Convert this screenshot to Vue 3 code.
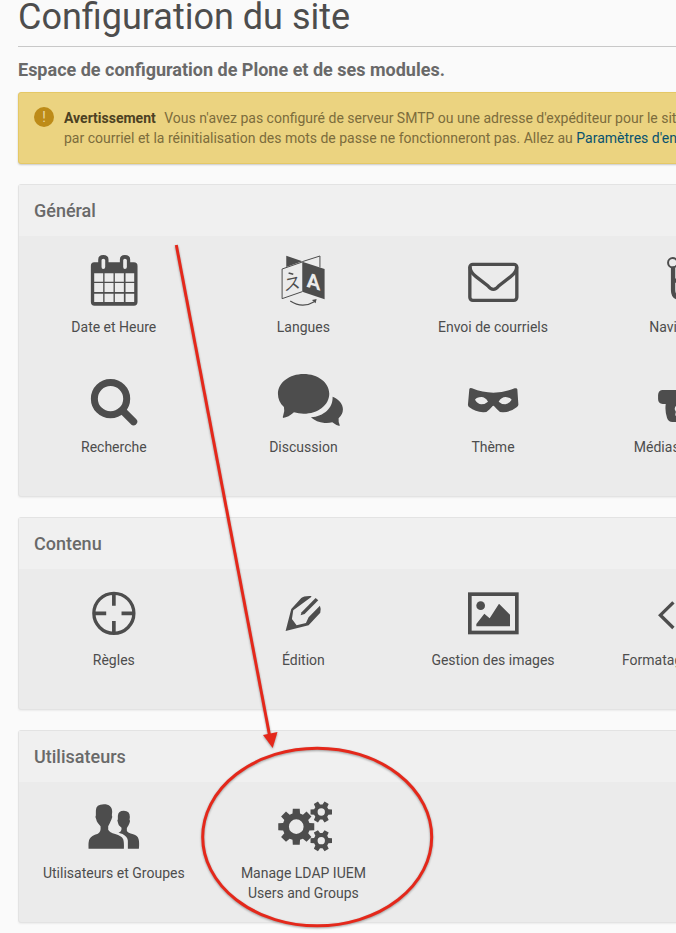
<script setup>
const gear = (cx, cy, teeth, outer, body, hole, wide, narrow, start = 0) => {
  const step = (Math.PI * 2) / teeth
  const points = []
  for (let i = 0; i < teeth; i++) {
    const a = start + i * step
    for (const [offset, r] of [[-wide, body], [-narrow, outer], [narrow, outer], [wide, body]]) {
      points.push(`${(cx + Math.cos(a + offset) * r).toFixed(1)} ${(cy + Math.sin(a + offset) * r).toFixed(1)}`)
    }
  }
  return `M${points.join('L')}Z M${cx - hole} ${cy}a${hole} ${hole} 0 1 0 ${hole * 2} 0a${hole} ${hole} 0 1 0 ${-hole * 2} 0Z`
}
const gears = [
  gear(320, 320, 8, 55, 41, 22, 0.28, 0.19),
  gear(395, 276, 6, 33, 23, 11, 0.36, 0.22),
  gear(395, 362, 6, 33, 23, 11, 0.36, 0.22)
].join(' ')

const panels = [
  {
    title: 'Général',
    items: [
      { label: 'Date et Heure', icon: 'calendar', box: '-3.6 -9 270 240' },
      { label: 'Langues', icon: 'language', box: '565.2 -9 270 240' },
      { label: 'Envoi de courriels', icon: 'mail', box: '54 -9 270 240' },
      { label: 'Navigation', icon: 'navigation', box: '622.8 -9 270 240' },
      { label: 'Recherche', icon: 'search', box: '-3.6 -9 270 240' },
      { label: 'Discussion', icon: 'discussion', box: '565.2 -9 270 240' },
      { label: 'Thème', icon: 'theme', box: '54 -9 270 240' },
      { label: 'Médias sociaux', icon: 'social', box: '622.8 -9 270 240' }
    ]
  },
  {
    title: 'Contenu',
    items: [
      { label: 'Règles', icon: 'rules', box: '-3.6 -30 270 240' },
      { label: 'Édition', icon: 'editing', box: '565.2 -30 270 240' },
      { label: 'Gestion des images', icon: 'image', box: '54 -30 270 240' },
      { label: 'Formatage du texte', icon: 'code', box: '622.8 -30 270 240' }
    ]
  },
  {
    title: 'Utilisateurs',
    items: [
      { label: 'Utilisateurs et Groupes', icon: 'users', box: '176.4 189 270 240' },
      { label: 'Manage LDAP IUEM Users and Groups', icon: 'gears', box: '205.2 189 270 240' }
    ]
  }
]
</script>

<template>
  <main class="page">
    <div class="content">
      <h1>Configuration du site</h1>
      <p class="lead">Espace de configuration de Plone et de ses modules.</p>
      <div class="warning">
        <span class="badge">!</span>
        <div class="message">
          <div><strong>Avertissement</strong>Vous n'avez pas configuré de serveur SMTP ou une adresse d'expéditeur pour le site. L'envoi</div>
          <div>par courriel et la réinitialisation des mots de passe ne fonctionneront pas. Allez au <a>Paramètres d'envoi</a></div>
        </div>
      </div>
      <section v-for="panel in panels" :key="panel.title" class="panel">
        <h2>{{ panel.title }}</h2>
        <div class="grid">
          <div v-for="item in panel.items" :key="item.label" class="item">
            <svg class="icon" :viewBox="item.box">
              <template v-if="item.icon === 'calendar'">
                <path fill-rule="evenodd" d="M72 67H84V59Q84 45 99 45Q115 45 115 59V67H149V59Q149 45 164 45Q180 45 180 59V67H191Q202 67 202 78V186Q202 197 191 197H73Q62 197 62 186V78Q62 67 72 67ZM94 61V81Q94 87 99 87Q105 87 105 81V61Q105 56 99 56Q94 56 94 61ZM159 61V81Q159 87 164 87Q170 87 170 81V61Q170 56 164 56Q159 56 159 61ZM72 100V125H99V100ZM103 100V125H130V100ZM134 100V125H161V100ZM166 100V125H192V100ZM72 129V156H99V129ZM103 129V156H130V129ZM134 129V156H161V129ZM166 129V156H192V129ZM72 161V186H99V161ZM103 161V186H130V161ZM134 161V186H161V161ZM166 161V186H192V161Z" />
              </template>
              <template v-else-if="item.icon === 'language'">
                <path d="M650 47L698 64L650 81ZM698 65L765 87V178L698 155Z" />
                <path class="line" stroke-width="3" d="M698 66L637.500 87V176L698 155M698 65L751 48V82" />
                <path class="line" stroke-width="3.500" d="M662 183Q698 207 734 185" />
                <path d="M741 177L738 190L727 180Z" />
                <path class="line" stroke-width="4.500" d="M657 99L671 103" />
                <text class="glyph-dark" transform="translate(643 154) skewY(-12)">ス</text>
                <text class="glyph-light" transform="translate(711 140) skewY(16)">A</text>
              </template>
              <template v-else-if="item.icon === 'mail'">
                <rect class="line" x="119.500" y="73" width="141" height="108" rx="9" stroke-width="10" />
                <path class="line" stroke-width="10" d="M120 80C120 94 128 102 138 110L174 138Q190 158 206 138L242 110C252 102 260 94 260 80" />
              </template>
              <template v-else-if="item.icon === 'navigation'">
                <circle class="line" cx="727" cy="68" r="14" stroke-width="6" />
                <path class="line" stroke-width="13" d="M728 82V150Q728 174 751 174H784M728 122H780" />
                <circle class="line" cx="800" cy="122" r="14" stroke-width="6" />
                <circle class="line" cx="800" cy="174" r="14" stroke-width="6" />
              </template>
              <template v-else-if="item.icon === 'search'">
                <circle class="line" cx="121" cy="116" r="48.500" stroke-width="21" />
                <path class="line" stroke-width="22" stroke-linecap="round" d="M157 152L190 185" />
              </template>
              <template v-else-if="item.icon === 'discussion'">
                <path d="M702 42C745 42 779 68 779 101C779 135 745 161 702 161Q687 161 673 157Q657 172 640 174Q639 170 641 166Q646 154 643 141C631 130 625 117 625 101C625 68 660 42 702 42Z" />
                <path d="M789 110C808 118 820 132 820 148Q820 163 807 175Q806 186 810 194V198Q799 196 788 187Q778 190 765 189Q740 187 724 172C763 168 790 145 789 110Z" />
              </template>
              <template v-else-if="item.icon === 'theme'">
                <path fill-rule="evenodd" d="M118 87Q120 83 126 85Q190 111 254 85Q261 83 262 88L265 132Q266 137 261 141Q244 155 220 157Q208 158 201 148L194 140Q190 135 186 140L179 148Q171 158 159 157Q136 155 118 142Q113 138 114 132ZM135 119Q140 112 154 111Q166 111 174 125Q165 133 154 133Q143 132 135 119ZM206 125Q214 111 227 111Q240 112 245 119Q236 132 226 133Q214 133 206 125Z" />
              </template>
              <template v-else-if="item.icon === 'social'">
                <path fill-rule="evenodd" d="M695 90H820V133H791V166Q791 186 771 186H726Q714 186 710 174Q703 153 706 132H697Q683 130 683 117V105Q684 91 695 90ZM737 137Q731 143 734 151Q738 154 735 161Q733 170 745 172V137Z" />
              </template>
              <template v-else-if="item.icon === 'rules'">
                <circle class="line" cx="131" cy="100" r="60" stroke-width="10" />
                <path class="line" stroke-width="11" d="M131 40V77M131 123V160M71 100H108M154 100H191" />
              </template>
              <template v-else-if="item.icon === 'editing'">
                <path d="M648 153L665 87L695 54Q702 47 725 48V51L671 91L667 117L681 136L709 129L717 112L751 77Q755 86 752 98L717 136Z" />
                <path d="M693 106L696 97L738 54L746 61L705 102Z" />
              </template>
              <template v-else-if="item.icon === 'image'">
                <rect class="line" x="119.500" y="42.500" width="141" height="115" stroke-width="11" />
                <circle cx="152" cy="77" r="13" />
                <path d="M139 139V132L163 101L179 115L207 71L240 104V139Z" />
              </template>
              <template v-else-if="item.icon === 'code'">
                <path class="line" stroke-width="10" d="M729 67L690 105.500L729 144M789 67L828 105.500L789 144" />
              </template>
              <template v-else-if="item.icon === 'users'">
                <path d="M281 253C297 253 306 261 306 275L305 286Q308 290 304 298Q301 304 299 309L294 319V329Q298 337 315 342Q334 347 339 358Q342 367 341 386H235Q234 364 238 357Q243 347 263 341Q273 337 271 319L263 309Q259 304 258 298Q254 291 257 286V272Q257 253 281 253Z" />
                <path d="M341 272Q359 272 359 291L358 299Q361 302 358 309L355 316L350 324V333Q352 338 369 343Q382 346 385 357Q388 367 386 386H353V362Q352 350 337 342L325 338Q335 335 334 323L326 316Q324 311 323 307Q320 301 323 298V287Q324 272 341 272Z" />
              </template>
              <path v-else fill-rule="evenodd" :d="gears" />
            </svg>
            <span class="label">{{ item.label }}</span>
          </div>
        </div>
      </section>
    </div>
    <svg class="annotation" viewBox="0 0 676 933">
      <path class="stroke" d="M176.300 245L269.500 735" />
      <path class="head" d="M263 735L277.500 732L272.700 748Z" />
      <ellipse class="stroke" cx="317.200" cy="837" rx="114.500" ry="88.800" />
    </svg>
  </main>
</template>

<style>
body {
  margin: 0;
  background: #fafafa;
}
</style>

<style scoped>
.page {
  position: relative;
  box-sizing: border-box;
  width: 676px;
  height: 933px;
  padding-left: 18px;
  overflow: hidden;
  background: #fafafa;
  color: #4d4d4d;
  font-family: Roboto, sans-serif;
}
.content {
  width: 762px;
}
h1 {
  box-sizing: border-box;
  height: 47px;
  margin: 0;
  border-bottom: 1px solid #c8c8c8;
  font-size: 36px;
  font-weight: 400;
  line-height: 35px;
}
.lead {
  margin: 13px 0 12px;
  color: #696969;
  font-size: 18px;
  font-weight: 700;
  line-height: 20px;
}
.warning {
  box-sizing: border-box;
  display: flex;
  gap: 10px;
  height: 72px;
  padding: 14px 15px;
  border: 1px solid #e5c866;
  border-radius: 3px;
  background: #ebd380;
  box-shadow: 0 1px 2px rgba(0, 0, 0, 0.2);
  color: #7c6c3c;
  font-size: 14px;
  line-height: 20px;
  white-space: nowrap;
}
.badge {
  width: 20px;
  height: 20px;
  border-radius: 50%;
  background: #bd8b18;
  color: #ebd9a4;
  text-align: center;
}
.message {
  padding-top: 1px;
}
.message strong {
  margin-right: 8.5px;
  color: #4c4123;
}
.message a {
  color: #08526f;
}
.panel {
  margin-top: 20px;
  box-sizing: border-box;
  padding-bottom: 19px;
  border: 1px solid #e3e3e3;
  border-radius: 3px;
  background: #ebebeb;
  box-shadow: 0 1px 2px rgba(0, 0, 0, 0.06);
}
h2 {
  margin: 0;
  height: 51px;
  padding-left: 15px;
  background: #f0f0f0;
  color: #696969;
  font-size: 18px;
  font-weight: 500;
  line-height: 52px;
}
.grid {
  display: grid;
  grid-template-columns: repeat(4, 189.6px);
  padding-top: 1px;
}
.item {
  display: flex;
  flex-direction: column;
  align-items: center;
  height: 120px;
}
.icon {
  flex: none;
  width: 90px;
  height: 80px;
  overflow: visible;
  fill: #4d4d4d;
}
.line {
  fill: none;
  stroke: #4d4d4d;
}
.glyph-dark {
  font: 50px "Noto Sans CJK JP", sans-serif;
}
.glyph-light {
  fill: #ebebeb;
  font: 700 62px Roboto, sans-serif;
}
.label {
  max-width: 145px;
  font-size: 14px;
  line-height: 20px;
  text-align: center;
}
.annotation {
  position: absolute;
  top: 0;
  left: 0;
  width: 676px;
  height: 933px;
  filter: drop-shadow(0 1px 1px rgba(0, 0, 0, 0.35));
}
.stroke {
  fill: none;
  stroke: #e4281b;
  stroke-width: 3;
}
.head {
  fill: #e4281b;
}
</style>
